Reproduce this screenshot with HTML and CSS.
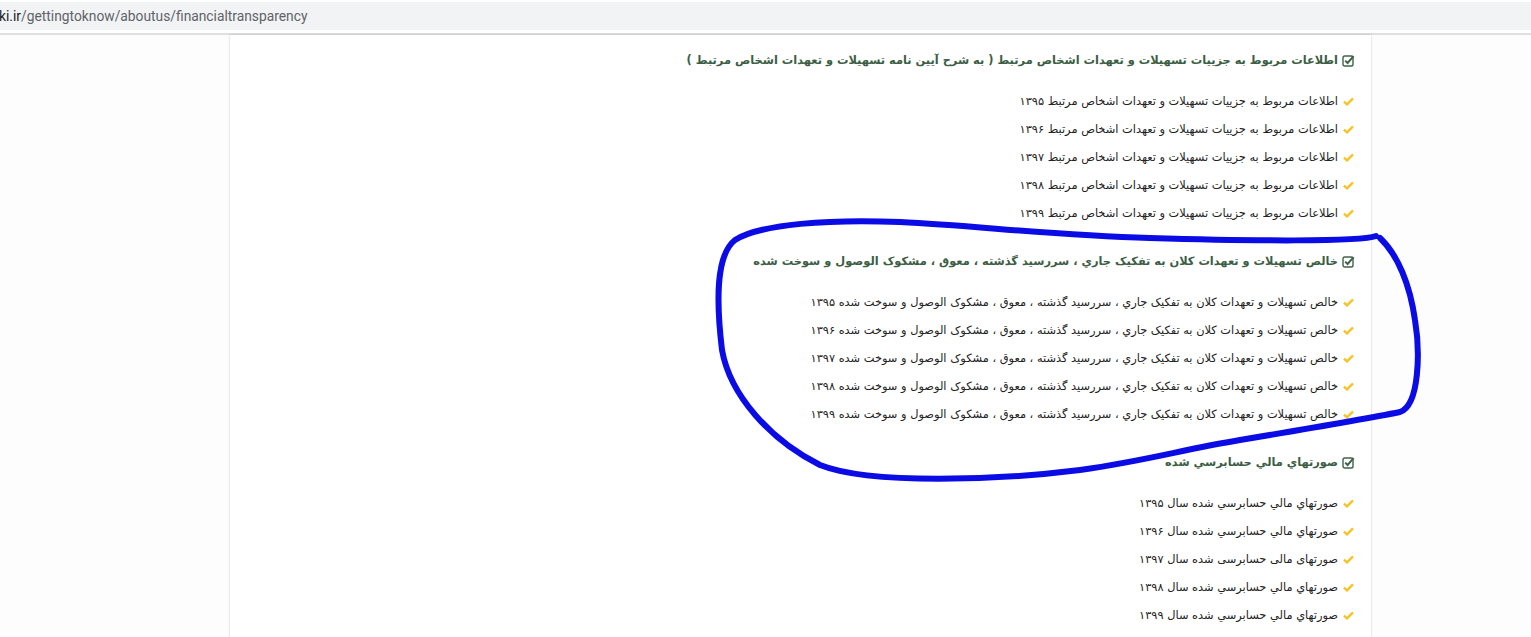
FILE: index.html
```html
<!DOCTYPE html>
<html lang="fa">
<head>
<meta charset="utf-8">
<title>financial transparency</title>
<link rel="stylesheet" href="styles.css">
</head>
<body>
<div class="browser-bar">
  <div class="omnibox"><span class="url"><span class="host">ki.ir</span>/gettingtoknow/aboutus/financialtransparency</span></div>
</div>
<div class="page">
  <div class="panel" dir="rtl">
    <section class="group">
      <h3 class="group-title"><svg class="sq" viewBox="0 0 13 13"><rect x="1" y="2" width="10" height="10" rx="1.8" fill="none" stroke="#3f6349" stroke-width="1.4"/><polyline points="3.2,6.6 5.6,9 11.6,2.2" fill="none" stroke="#3f6349" stroke-width="2"/></svg><span>اطلاعات مربوط به جزییات تسهیلات و تعهدات اشخاص مرتبط ( به شرح آیین نامه تسهیلات و تعهدات اشخاص مرتبط )</span></h3>
      <ul class="links">
        <li><svg class="tick" viewBox="0 0 11 9"><polyline points="1,4.6 4,7.4 10,1.4" fill="none" stroke="#f7c325" stroke-width="2.4"/></svg><span>اطلاعات مربوط به جزییات تسهیلات و تعهدات اشخاص مرتبط ۱۳۹۵</span></li>
        <li><svg class="tick" viewBox="0 0 11 9"><polyline points="1,4.6 4,7.4 10,1.4" fill="none" stroke="#f7c325" stroke-width="2.4"/></svg><span>اطلاعات مربوط به جزییات تسهیلات و تعهدات اشخاص مرتبط ۱۳۹۶</span></li>
        <li><svg class="tick" viewBox="0 0 11 9"><polyline points="1,4.6 4,7.4 10,1.4" fill="none" stroke="#f7c325" stroke-width="2.4"/></svg><span>اطلاعات مربوط به جزییات تسهیلات و تعهدات اشخاص مرتبط ۱۳۹۷</span></li>
        <li><svg class="tick" viewBox="0 0 11 9"><polyline points="1,4.6 4,7.4 10,1.4" fill="none" stroke="#f7c325" stroke-width="2.4"/></svg><span>اطلاعات مربوط به جزییات تسهیلات و تعهدات اشخاص مرتبط ۱۳۹۸</span></li>
        <li><svg class="tick" viewBox="0 0 11 9"><polyline points="1,4.6 4,7.4 10,1.4" fill="none" stroke="#f7c325" stroke-width="2.4"/></svg><span>اطلاعات مربوط به جزییات تسهیلات و تعهدات اشخاص مرتبط ۱۳۹۹</span></li>
      </ul>
    </section>
    <section class="group">
      <h3 class="group-title"><svg class="sq" viewBox="0 0 13 13"><rect x="1" y="2" width="10" height="10" rx="1.8" fill="none" stroke="#3f6349" stroke-width="1.4"/><polyline points="3.2,6.6 5.6,9 11.6,2.2" fill="none" stroke="#3f6349" stroke-width="2"/></svg><span>خالص تسهیلات و تعهدات کلان به تفکیک جاري ، سررسید گذشته ، معوق ، مشکوک الوصول و سوخت شده</span></h3>
      <ul class="links">
        <li><svg class="tick" viewBox="0 0 11 9"><polyline points="1,4.6 4,7.4 10,1.4" fill="none" stroke="#f7c325" stroke-width="2.4"/></svg><span>خالص تسهیلات و تعهدات کلان به تفکیک جاري ، سررسید گذشته ، معوق ، مشکوک الوصول و سوخت شده ۱۳۹۵</span></li>
        <li><svg class="tick" viewBox="0 0 11 9"><polyline points="1,4.6 4,7.4 10,1.4" fill="none" stroke="#f7c325" stroke-width="2.4"/></svg><span>خالص تسهیلات و تعهدات کلان به تفکیک جاري ، سررسید گذشته ، معوق ، مشکوک الوصول و سوخت شده ۱۳۹۶</span></li>
        <li><svg class="tick" viewBox="0 0 11 9"><polyline points="1,4.6 4,7.4 10,1.4" fill="none" stroke="#f7c325" stroke-width="2.4"/></svg><span>خالص تسهیلات و تعهدات کلان به تفکیک جاري ، سررسید گذشته ، معوق ، مشکوک الوصول و سوخت شده ۱۳۹۷</span></li>
        <li><svg class="tick" viewBox="0 0 11 9"><polyline points="1,4.6 4,7.4 10,1.4" fill="none" stroke="#f7c325" stroke-width="2.4"/></svg><span>خالص تسهیلات و تعهدات کلان به تفکیک جاري ، سررسید گذشته ، معوق ، مشکوک الوصول و سوخت شده ۱۳۹۸</span></li>
        <li><svg class="tick" viewBox="0 0 11 9"><polyline points="1,4.6 4,7.4 10,1.4" fill="none" stroke="#f7c325" stroke-width="2.4"/></svg><span>خالص تسهیلات و تعهدات کلان به تفکیک جاري ، سررسید گذشته ، معوق ، مشکوک الوصول و سوخت شده ۱۳۹۹</span></li>
      </ul>
    </section>
    <section class="group">
      <h3 class="group-title"><svg class="sq" viewBox="0 0 13 13"><rect x="1" y="2" width="10" height="10" rx="1.8" fill="none" stroke="#3f6349" stroke-width="1.4"/><polyline points="3.2,6.6 5.6,9 11.6,2.2" fill="none" stroke="#3f6349" stroke-width="2"/></svg><span>صورتهاي مالي حسابرسي شده</span></h3>
      <ul class="links">
        <li><svg class="tick" viewBox="0 0 11 9"><polyline points="1,4.6 4,7.4 10,1.4" fill="none" stroke="#f7c325" stroke-width="2.4"/></svg><span>صورتهاي مالي حسابرسي شده سال ۱۳۹۵</span></li>
        <li><svg class="tick" viewBox="0 0 11 9"><polyline points="1,4.6 4,7.4 10,1.4" fill="none" stroke="#f7c325" stroke-width="2.4"/></svg><span>صورتهاي مالي حسابرسي شده سال ۱۳۹۶</span></li>
        <li><svg class="tick" viewBox="0 0 11 9"><polyline points="1,4.6 4,7.4 10,1.4" fill="none" stroke="#f7c325" stroke-width="2.4"/></svg><span>صورتهای مالی حسابرسی شده سال ۱۳۹۷</span></li>
        <li><svg class="tick" viewBox="0 0 11 9"><polyline points="1,4.6 4,7.4 10,1.4" fill="none" stroke="#f7c325" stroke-width="2.4"/></svg><span>صورتهاي مالي حسابرسي شده سال ۱۳۹۸</span></li>
        <li><svg class="tick" viewBox="0 0 11 9"><polyline points="1,4.6 4,7.4 10,1.4" fill="none" stroke="#f7c325" stroke-width="2.4"/></svg><span>صورتهاي مالي حسابرسي شده سال ۱۳۹۹</span></li>
      </ul>
    </section>
  </div>
</div>
<svg class="annotation" viewBox="0 0 1531 637" width="1531" height="637">
  <path d="M 1376 236 C 1360 242, 1250 241, 1150 238 C 1050 235, 980 226, 900 222 C 830 219, 760 224, 735 240 C 716 255, 716 300, 722 350 C 730 395, 770 440, 820 465 C 870 485, 1000 480, 1080 470 C 1150 460, 1180 450, 1240 440 C 1300 430, 1360 420, 1400 412 C 1420 405, 1420 350, 1415 320 C 1410 285, 1398 255, 1380 238" fill="none" stroke="#0b0be6" stroke-width="6" stroke-linecap="round" stroke-linejoin="round"/>
</svg>
</body>
</html>
```

FILE: styles.css
```css
html, body {
  margin: 0;
  padding: 0;
  background: #ffffff;
  height: 100%;
  overflow: hidden;
}

.browser-bar {
  padding-top: 2px;
  padding-bottom: 3px;
  border-bottom: 2px solid #dedfe1;
  background: #ffffff;
}

.omnibox {
  height: 28px;
  background: #f1f3f4;
  display: flex;
  align-items: center;
  font-family: Roboto, "Liberation Sans", sans-serif;
  font-size: 13.8px;
  color: #5f6368;
  white-space: nowrap;
  overflow: hidden;
}

.url {
  margin-left: -1px;
}

.host {
  color: #202124;
}

.page {
  background: #fdfdfd;
  min-height: calc(100vh - 35px);
  display: flex;
}

.panel {
  margin-left: 230px;
  width: 1141px;
  background: #ffffff;
  box-shadow: 0 0 2px rgba(0, 0, 0, 0.22);
  padding: 13px 16px 0 0;
  box-sizing: border-box;
  font-family: "DejaVu Sans", "Noto Sans", sans-serif;
}

.group {
  margin-bottom: 22px;
}

.group-title {
  margin: 0;
  display: flex;
  align-items: center;
  gap: 4px;
  height: 24px;
  font-size: 11.4px;
  font-weight: bold;
  color: #3c5e44;
  white-space: nowrap;
}

.sq {
  width: 13px;
  height: 13px;
  flex: none;
}

.links {
  list-style: none;
  margin: 15px 0 0 0;
  padding: 0;
}

.links li {
  height: 28px;
  display: flex;
  align-items: center;
  gap: 5px;
  font-size: 11.4px;
  color: #222222;
  white-space: nowrap;
}

.tick {
  width: 11px;
  height: 9px;
  flex: none;
  margin-right: 1px;
}

.annotation {
  position: absolute;
  top: 0;
  left: 0;
  pointer-events: none;
}
```
